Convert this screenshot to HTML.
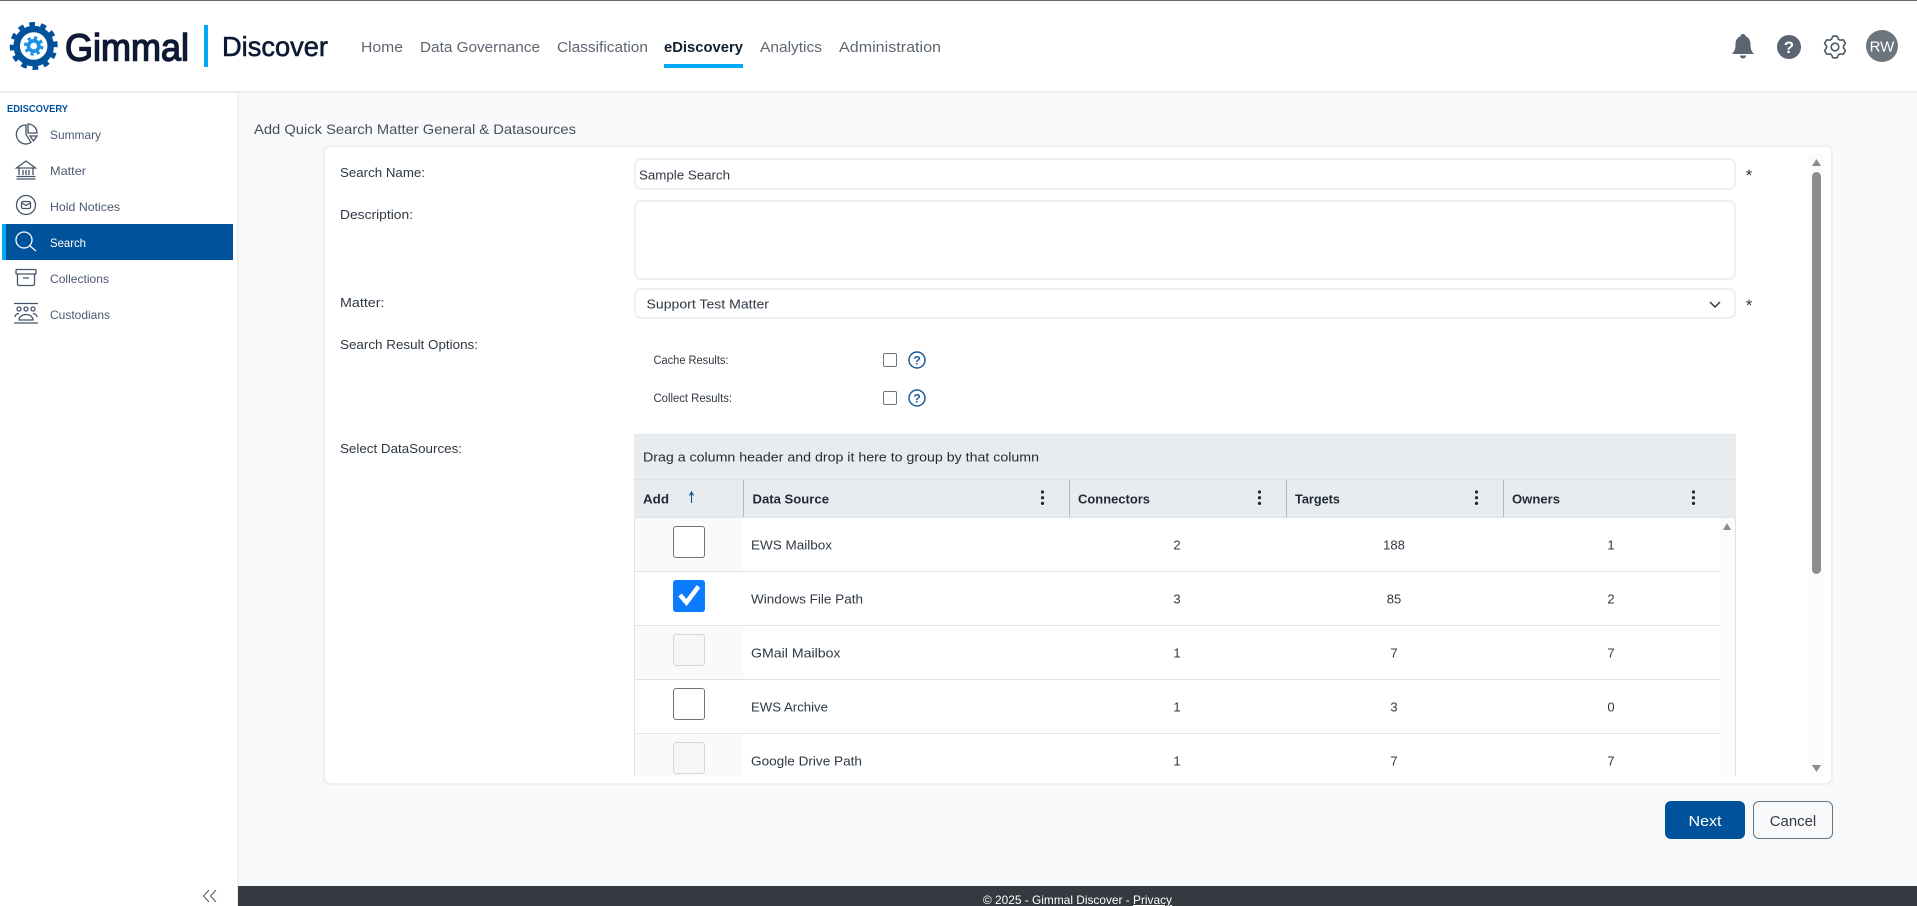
<!DOCTYPE html>
<html lang="en"><head><meta charset="utf-8"><title>Gimmal Discover</title>
<style>
html,body{margin:0;padding:0;width:1917px;height:906px;overflow:hidden;background:#f8f9fa}
div{position:absolute;box-sizing:border-box}
svg{position:absolute;left:0;top:0}
text{font-family:"Liberation Sans",sans-serif}
.nav{font-size:15px;fill:#5d6772}
.side{font-size:12px;fill:#4b5a70}
.lab{font-size:13px;fill:#2f3945}
.cell{font-size:13px;fill:#2f3945}
.hd{font-size:13px;font-weight:bold;fill:#1f2a36}
.num{font-size:13px;fill:#2f3945;text-anchor:middle}
.ic{fill:none;stroke:#44546a;stroke-width:1.3}
.box{background:#fff;border:2px solid #eeeff1;border-radius:7px}
.cb{width:32px;height:32px;left:673px;border-radius:3px;border:1px solid #6c757d;background:#fff}
.cd{border-color:#d6d6d6;background:#f6f6f6}
.sep{left:635px;width:1085px;height:1px;background:#e1e3e6}
.alt{left:635px;width:108px;height:54px;background:#fafafa}
.v{width:1px;top:480px;height:37px;background:#b4b9be}
.sc{width:14px;height:14px;border:1px solid #6c757d;border-radius:2px;left:883px;background:#fff}
</style></head><body>
<!-- header -->
<div style="left:0;top:0;width:1917px;height:93px;background:#fff;border-bottom:2px solid #ebecee"></div>
<div style="left:0;top:0;width:1917px;height:1px;background:#6b6670"></div>
<div style="left:664px;top:64px;width:79px;height:4px;background:#00a8f7"></div>
<div style="left:204px;top:25px;width:4px;height:42px;background:#00a8f7"></div>
<!-- sidebar -->
<div style="left:0;top:93px;width:239px;height:813px;background:#fff;border-right:2px solid #eeeff1"></div>
<div style="left:2px;top:224px;width:231px;height:36px;background:#00529b;border-left:4px solid #00a8f7"></div>
<!-- footer -->
<div style="left:238px;top:886px;width:1679px;height:20px;background:#343a40"></div>
<!-- card -->
<div style="left:323px;top:145px;width:1510px;height:640px;background:#fff;border:2px solid #eeeff1;border-radius:7px"></div>
<div style="left:1809px;top:154px;width:15px;height:622px;background:#fbfbfb"></div>
<div style="left:1812px;top:172px;width:9px;height:402px;background:#8c8c8c;border-radius:5px"></div>
<!-- inputs -->
<div class="box" style="left:634px;top:158px;width:1102px;height:32px"></div>
<div class="box" style="left:634px;top:200px;width:1102px;height:80px"></div>
<div class="box" style="left:634px;top:288px;width:1102px;height:31px"></div>
<div class="sc" style="top:353px"></div>
<div class="sc" style="top:391px"></div>
<!-- grid -->
<div style="left:634px;top:434px;width:1102px;height:83px;background:#e9ecef;border-top:1px solid #e1e3e6"></div>
<div style="left:634px;top:479px;width:1102px;height:1px;background:#dfe2e5"></div>
<div style="left:634px;top:517px;width:1102px;height:259px;background:#fff;border-left:1px solid #dfe2e5;border-right:1px solid #dfe2e5;border-top:1px solid #dfe2e5"></div>
<div class="v" style="left:743px"></div><div class="v" style="left:1069px"></div><div class="v" style="left:1286px"></div><div class="v" style="left:1503px"></div>
<div class="alt" style="top:518px;height:53px"></div>
<div class="alt" style="top:626px"></div>
<div class="alt" style="top:734px;height:42px"></div>
<div class="sep" style="top:571px"></div><div class="sep" style="top:625px"></div><div class="sep" style="top:679px"></div><div class="sep" style="top:733px"></div>
<div style="left:1720px;top:518px;width:15px;height:258px;background:#fbfbfb"></div>
<div class="cb" style="top:526px"></div>
<div class="cb" style="top:580px;border:0;background:#0b7bff"></div>
<div class="cb cd" style="top:634px"></div>
<div class="cb" style="top:688px"></div>
<div class="cb cd" style="top:742px;height:32px"></div>
<!-- buttons -->
<div style="left:1665px;top:801px;width:80px;height:38px;background:#00529b;border-radius:6px"></div>
<div style="left:1753px;top:801px;width:80px;height:38px;border:1px solid #6c757d;border-radius:6px"></div>

<svg width="1917" height="906" viewBox="0 0 1917 906">
<!-- logo -->
<circle cx="33.7" cy="46" r="21.5" fill="none" stroke="#00529b" stroke-width="5" stroke-dasharray="5.6 5.66" transform="rotate(-12 33.7 46)"/>
<circle cx="33.7" cy="46" r="17" fill="#fff" stroke="#00529b" stroke-width="6.5"/>
<circle cx="33.7" cy="46" r="8.2" fill="none" stroke="#1a90e6" stroke-width="3" stroke-dasharray="3.2 3.24"/>
<circle cx="33.7" cy="46" r="5.2" fill="none" stroke="#1a90e6" stroke-width="3.6"/>
<text x="65" y="60.5" font-size="38" textLength="124" lengthAdjust="spacingAndGlyphs" fill="#0e1a33" stroke="#0e1a33" stroke-width="1.4">Gimmal</text>
<text x="222" y="56" font-size="28" textLength="106" lengthAdjust="spacingAndGlyphs" fill="#0c1a33" stroke="#0c1a33" stroke-width=".6">Discover</text>
<!-- nav -->
<text class="nav" x="361" y="52" textLength="42" lengthAdjust="spacingAndGlyphs">Home</text>
<text class="nav" x="420" y="52" textLength="120" lengthAdjust="spacingAndGlyphs">Data Governance</text>
<text class="nav" x="557" y="52" textLength="91" lengthAdjust="spacingAndGlyphs">Classification</text>
<text class="nav" x="664" y="52" textLength="79" lengthAdjust="spacingAndGlyphs" style="fill:#10202f;font-weight:bold">eDiscovery</text>
<text class="nav" x="760" y="52" textLength="62" lengthAdjust="spacingAndGlyphs">Analytics</text>
<text class="nav" x="839" y="52" textLength="102" lengthAdjust="spacingAndGlyphs">Administration</text>
<!-- header right -->
<path d="M1743 34c-1.5 0-2.5 1-2.5 2.3C1736.5 37.8 1735.5 41 1735.5 45c0 5-1.5 6.5-3.5 9h22c-2-2.5-3.5-4-3.5-9c0-4-1-7.2-5-8.7c0-1.3-1-2.3-2.5-2.3z" fill="#5a6472"/>
<path d="M1740 55.5h6a3 3 0 0 1-6 0z" fill="#5a6472"/>
<circle cx="1789" cy="47" r="12" fill="#5a6472"/>
<text x="1789" y="53" font-size="17" text-anchor="middle" fill="#fff" style="font-weight:bold">?</text>
<g transform="translate(1835 47)" fill="none" stroke="#4d5867" stroke-width="1.6" stroke-linejoin="round">
<polygon points="-3.46,-7.77 -2.1,-10.8 2.1,-10.8 3.46,-7.77 5,-6.88 8.3,-7.22 10.4,-3.58 8.45,-.89 8.45,.89 10.4,3.58 8.3,7.22 5,6.88 3.46,7.77 2.1,10.8 -2.1,10.8 -3.46,7.77 -5,6.88 -8.3,7.22 -10.4,3.58 -8.45,.89 -8.45,-.89 -10.4,-3.58 -8.3,-7.22 -5,-6.88"/>
<circle r="3.8"/>
</g>
<circle cx="1882" cy="46" r="16" fill="#6c757d"/>
<text x="1882" y="51.5" font-size="15" text-anchor="middle" fill="#fff">RW</text>
<!-- sidebar text -->
<text x="7" y="112" font-size="10.5" textLength="61" lengthAdjust="spacingAndGlyphs" fill="#00529b" style="font-weight:bold">EDISCOVERY</text>
<text class="side" x="50" y="139" textLength="51" lengthAdjust="spacingAndGlyphs">Summary</text>
<text class="side" x="50" y="175" textLength="36" lengthAdjust="spacingAndGlyphs">Matter</text>
<text class="side" x="50" y="211" textLength="70" lengthAdjust="spacingAndGlyphs">Hold Notices</text>
<text class="side" x="50" y="247" textLength="36" lengthAdjust="spacingAndGlyphs" style="fill:#fff">Search</text>
<text class="side" x="50" y="283" textLength="59" lengthAdjust="spacingAndGlyphs">Collections</text>
<text class="side" x="50" y="319" textLength="60" lengthAdjust="spacingAndGlyphs">Custodians</text>
<!-- sidebar icons -->
<g class="ic">
<path d="M26 125A9.5 9.5 0 1 0 31 142.5L26 134.5Z"/><path d="M28 124A9 9 0 0 1 37 133H28Z"/><path d="M30 136H37L33.5 141Z"/>
<path d="M16.5 168L26 161L35.5 168Z"/><path d="M19 168V175M23 170V175M26 170V175M29 170V175M33 168V175M16.5 176.5H35.5M16.5 179H35.5"/>
<circle cx="26" cy="205" r="9.5"/><rect x="21.5" y="201.5" width="9" height="7" rx="1.5"/><path d="M22 203L26 205.5L30 203"/>
<rect x="16" y="269.5" width="20" height="4.5" rx=".8"/><path d="M17.5 274V284a1.5 1.5 0 0 0 1.5 1.5H33a1.5 1.5 0 0 0 1.5-1.5V274M23 278H29"/>
<path d="M14 303.5H38M14 323H38"/><circle cx="19" cy="309" r="2"/><circle cx="26" cy="309" r="2"/><circle cx="33" cy="309" r="2"/><path d="M15 317c0-2 2-3.5 4-3.5M37 317c0-2-2-3.5-4-3.5M19 320c0-3 3-5.5 7-5.5s7 2.5 7 5.5Z"/>
</g>
<g fill="none" stroke="#fff" stroke-width="1.3"><circle cx="24" cy="240" r="8"/><path d="M30 246L36 251"/></g>
<path d="M209 890L203.5 896L209 902M216 890L210.5 896L216 902" fill="none" stroke="#4b5a70" stroke-width="1"/>
<!-- title -->
<text x="254" y="134" font-size="14" textLength="322" lengthAdjust="spacingAndGlyphs" fill="#4a5058">Add Quick Search Matter General &amp; Datasources</text>
<!-- form -->
<text class="lab" x="340" y="177" textLength="85" lengthAdjust="spacingAndGlyphs">Search Name:</text>
<text class="lab" x="340" y="219" textLength="73" lengthAdjust="spacingAndGlyphs">Description:</text>
<text class="lab" x="340" y="307" textLength="44.5" lengthAdjust="spacingAndGlyphs">Matter:</text>
<text class="lab" x="340" y="349" textLength="138" lengthAdjust="spacingAndGlyphs">Search Result Options:</text>
<text class="lab" x="340" y="453" textLength="122" lengthAdjust="spacingAndGlyphs">Select DataSources:</text>
<text class="lab" x="639" y="179.5" textLength="91" lengthAdjust="spacingAndGlyphs">Sample Search</text>
<text class="lab" x="646.5" y="308.5" textLength="122.5" lengthAdjust="spacingAndGlyphs">Support Test Matter</text>
<path d="M1710 302L1715 307L1720 302" fill="none" stroke="#343a40" stroke-width="1.5"/>
<text x="1749" y="181" font-size="17" text-anchor="middle" fill="#2f3945">*</text>
<text x="1749" y="311" font-size="17" text-anchor="middle" fill="#2f3945">*</text>
<text x="653.5" y="364" font-size="11.5" textLength="75" lengthAdjust="spacingAndGlyphs" fill="#2f3945">Cache Results:</text>
<text x="653.5" y="402" font-size="11.5" textLength="78.5" lengthAdjust="spacingAndGlyphs" fill="#2f3945">Collect Results:</text>
<circle cx="917" cy="360" r="8" fill="#fff" stroke="#1c5a9a" stroke-width="1.5"/>
<text x="917" y="364.5" font-size="12" text-anchor="middle" fill="#1c5a9a" style="font-weight:bold">?</text>
<circle cx="917" cy="398" r="8" fill="#fff" stroke="#1c5a9a" stroke-width="1.5"/>
<text x="917" y="402.5" font-size="12" text-anchor="middle" fill="#1c5a9a" style="font-weight:bold">?</text>
<!-- scroll arrows -->
<path d="M1816.5 159L1821 166H1812Z" fill="#8c8c8c"/>
<path d="M1812 765H1821L1816.5 772Z" fill="#8c8c8c"/>
<path d="M1727 523L1731 530H1723Z" fill="#8c8c8c"/>
<!-- grid text -->
<text x="643" y="461.5" font-size="13" textLength="396" lengthAdjust="spacingAndGlyphs" fill="#1f2a36">Drag a column header and drop it here to group by that column</text>
<text class="hd" x="643" y="503.5" textLength="26" lengthAdjust="spacingAndGlyphs">Add</text>
<path d="M691.5 503V493M689.5 495.5L691.5 492L693.5 495.5" fill="none" stroke="#00529b" stroke-width="1.1"/>
<text class="hd" x="752.5" y="503.5" textLength="76.5" lengthAdjust="spacingAndGlyphs">Data Source</text>
<text class="hd" x="1078" y="503.5" textLength="72" lengthAdjust="spacingAndGlyphs">Connectors</text>
<text class="hd" x="1295" y="503.5" textLength="45" lengthAdjust="spacingAndGlyphs">Targets</text>
<text class="hd" x="1512" y="503.5" textLength="48" lengthAdjust="spacingAndGlyphs">Owners</text>
<g fill="#1f2a36">
<circle cx="1042.5" cy="492" r="1.6"/><circle cx="1042.5" cy="497.7" r="1.6"/><circle cx="1042.5" cy="503.4" r="1.6"/>
<circle cx="1259.5" cy="492" r="1.6"/><circle cx="1259.5" cy="497.7" r="1.6"/><circle cx="1259.5" cy="503.4" r="1.6"/>
<circle cx="1476.5" cy="492" r="1.6"/><circle cx="1476.5" cy="497.7" r="1.6"/><circle cx="1476.5" cy="503.4" r="1.6"/>
<circle cx="1693.5" cy="492" r="1.6"/><circle cx="1693.5" cy="497.7" r="1.6"/><circle cx="1693.5" cy="503.4" r="1.6"/>
</g>
<path d="M680 595L686.5 602.5L698.5 586.5" fill="none" stroke="#fff" stroke-width="4.5"/>
<text class="cell" x="751" y="549.5" textLength="81" lengthAdjust="spacingAndGlyphs">EWS Mailbox</text>
<text class="cell" x="751" y="603.5" textLength="112" lengthAdjust="spacingAndGlyphs">Windows File Path</text>
<text class="cell" x="751" y="657.5" textLength="89.5" lengthAdjust="spacingAndGlyphs">GMail Mailbox</text>
<text class="cell" x="751" y="711.5" textLength="77" lengthAdjust="spacingAndGlyphs">EWS Archive</text>
<text class="cell" x="751" y="765.5" textLength="111" lengthAdjust="spacingAndGlyphs">Google Drive Path</text>
<text class="num" x="1177" y="549.5">2</text><text class="num" x="1394" y="549.5">188</text><text class="num" x="1611" y="549.5">1</text>
<text class="num" x="1177" y="603.5">3</text><text class="num" x="1394" y="603.5">85</text><text class="num" x="1611" y="603.5">2</text>
<text class="num" x="1177" y="657.5">1</text><text class="num" x="1394" y="657.5">7</text><text class="num" x="1611" y="657.5">7</text>
<text class="num" x="1177" y="711.5">1</text><text class="num" x="1394" y="711.5">3</text><text class="num" x="1611" y="711.5">0</text>
<text class="num" x="1177" y="765.5">1</text><text class="num" x="1394" y="765.5">7</text><text class="num" x="1611" y="765.5">7</text>
<!-- buttons -->
<text x="1705" y="826" font-size="15" text-anchor="middle" textLength="33" lengthAdjust="spacingAndGlyphs" fill="#fff">Next</text>
<text x="1793" y="826" font-size="15" text-anchor="middle" textLength="46.5" lengthAdjust="spacingAndGlyphs" fill="#343a40">Cancel</text>
<!-- footer -->
<text x="983" y="904" font-size="12" textLength="189" lengthAdjust="spacingAndGlyphs" fill="#fff">© 2025 - Gimmal Discover - <tspan text-decoration="underline">Privacy</tspan></text>
</svg>
</body></html>
